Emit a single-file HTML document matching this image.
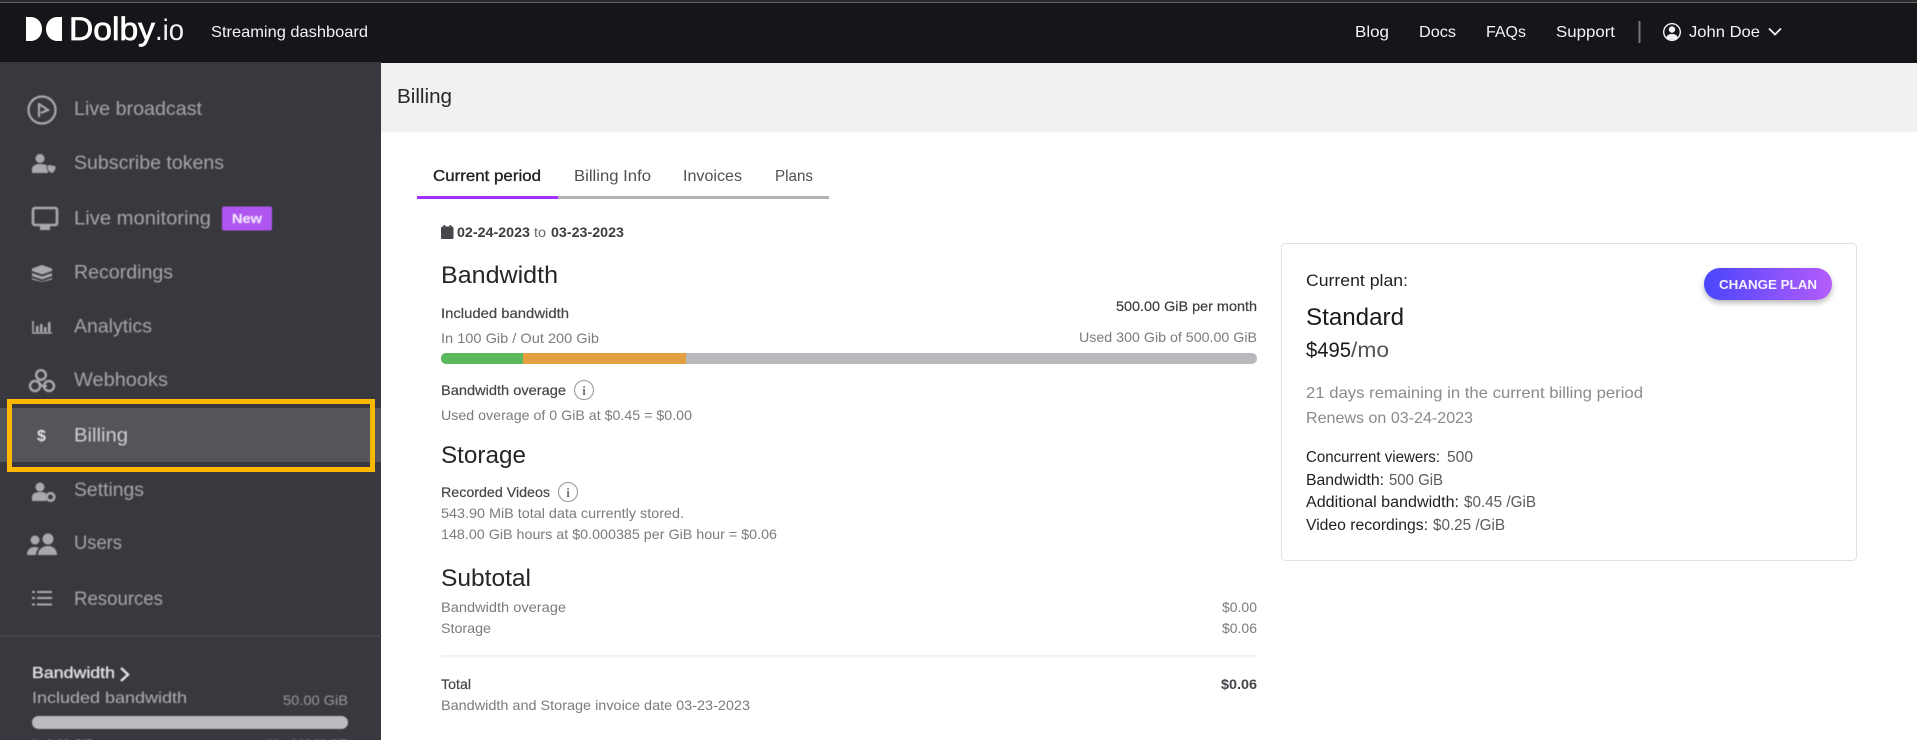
<!DOCTYPE html>
<html lang="en">
<head>
<meta charset="utf-8">
<title>Dolby.io Streaming dashboard - Billing</title>
<style>
html,body{margin:0;padding:0;background:#fff;width:1917px;height:740px;overflow:hidden}
svg{display:block}
text{font-family:"Liberation Sans",sans-serif;white-space:pre}
.nav{font-size:19px;fill:#a5a5a9}
.top{font-size:16px;fill:#f4f4f6}
.t13{font-size:14px;fill:#7b7b80}
.m13{font-size:14px;fill:#45454a;stroke:#45454a;stroke-width:.2px}
.h{font-size:24px;fill:#26262a}
.tab{font-size:16px;fill:#4f4f55}
.card{font-size:15.500px;fill:#1f1f24}
.val{font-size:15.500px;fill:#5b5b60}
.gray{font-size:16px;fill:#8a8a8f}
</style>
</head>
<body>
<svg width="1917" height="740" viewBox="0 0 1917 740" xmlns="http://www.w3.org/2000/svg">
<defs>
<filter id="b" x="-2%" y="-2%" width="104%" height="104%"><feGaussianBlur stdDeviation="0.45"/></filter>
<linearGradient id="g" x1="0" x2="1" y1="0" y2="0"><stop offset="0" stop-color="#4a46fb"/><stop offset="1" stop-color="#b45cfb"/></linearGradient>
<filter id="s" x="-20%" y="-30%" width="140%" height="180%"><feDropShadow dx="0" dy="3" stdDeviation="3" flood-color="#000" flood-opacity=".28"/></filter>
</defs>

<!-- header -->
<rect x="0" y="0" width="1917" height="63" fill="#15151a"/>
<rect x="0" y="0" width="1917" height="2" fill="#2b2b2e"/>
<rect x="0" y="2" width="1917" height="1" fill="#626266"/>
<path d="M26 17h4.500c6.600 0 11.500 5.200 11.500 12s-4.900 12-11.500 12H26z" fill="#fff"/>
<path d="M62 17h-4.500c-6.600 0-11.500 5.200-11.500 12s4.900 12 11.500 12H62z" fill="#fff"/>
<text x="69" y="40" font-size="32" fill="#fff" stroke="#fff" stroke-width=".7" textLength="86" lengthAdjust="spacingAndGlyphs">Dolby</text>
<text x="155" y="40" font-size="30" fill="#f2f2f2" font-weight="400" textLength="29" lengthAdjust="spacingAndGlyphs">.io</text>
<text x="211" y="37" class="top" textLength="157" lengthAdjust="spacingAndGlyphs">Streaming dashboard</text>
<text x="1355" y="37" class="top" textLength="34" lengthAdjust="spacingAndGlyphs">Blog</text>
<text x="1419" y="37" class="top" textLength="37" lengthAdjust="spacingAndGlyphs">Docs</text>
<text x="1486" y="37" class="top" textLength="40" lengthAdjust="spacingAndGlyphs">FAQs</text>
<text x="1556" y="37" class="top" textLength="59" lengthAdjust="spacingAndGlyphs">Support</text>
<rect x="1638.500" y="21" width="2" height="22" fill="#77777b"/>
<circle cx="1672" cy="32" r="8.300" fill="none" stroke="#f4f4f6" stroke-width="1.400"/>
<circle cx="1672" cy="29.500" r="3.200" fill="#f4f4f6"/>
<path d="M1666 38c1-3 3-4 6-4s5 1 6 4c-2 2-10 2-12 0z" fill="#f4f4f6"/>
<text x="1689" y="37" class="top" textLength="71" lengthAdjust="spacingAndGlyphs">John Doe</text>
<path d="M1769 28.500l6 6 6-6" fill="none" stroke="#f4f4f6" stroke-width="1.800"/>

<!-- sidebar -->
<rect x="0" y="62" width="381" height="678" fill="#38383e"/>
<rect x="0" y="408" width="381" height="54" fill="#54555a"/>
<g filter="url(#b)">
<text x="74" y="115" class="nav" textLength="128" lengthAdjust="spacingAndGlyphs">Live broadcast</text>
<text x="74" y="169" class="nav" textLength="150" lengthAdjust="spacingAndGlyphs">Subscribe tokens</text>
<text x="74" y="224.500" class="nav" textLength="137" lengthAdjust="spacingAndGlyphs">Live monitoring</text>
<rect x="222" y="206.500" width="50" height="24" rx="2" fill="#b056f0"/>
<text x="232" y="223" font-size="13" font-weight="700" fill="#f3e4ff" textLength="30" lengthAdjust="spacingAndGlyphs">New</text>
<text x="74" y="278.500" class="nav" textLength="99" lengthAdjust="spacingAndGlyphs">Recordings</text>
<text x="74" y="332.500" class="nav" textLength="78" lengthAdjust="spacingAndGlyphs">Analytics</text>
<text x="74" y="386" class="nav" textLength="94" lengthAdjust="spacingAndGlyphs">Webhooks</text>
<text x="74" y="441.500" class="nav" style="fill:#cfcfd2" textLength="54" lengthAdjust="spacingAndGlyphs">Billing</text>
<text x="74" y="496" class="nav" textLength="70" lengthAdjust="spacingAndGlyphs">Settings</text>
<text x="74" y="549" class="nav" textLength="48" lengthAdjust="spacingAndGlyphs">Users</text>
<text x="74" y="605" class="nav" textLength="89" lengthAdjust="spacingAndGlyphs">Resources</text>

<!-- sidebar icons -->
<circle cx="42" cy="110" r="13.500" fill="none" stroke="#a9a9ad" stroke-width="2.200"/>
<path d="M39 103v14M39 104l9 6-7 3" fill="none" stroke="#a9a9ad" stroke-width="2.200"/>
<circle cx="40" cy="158.500" r="4.500" fill="#a9a9ad"/>
<path d="M32 173v-4c0-3 3-5 8-5 3 0 6 .7 8 2v7z" fill="#a9a9ad"/>
<path d="M49 164.500l7 1.500c0 4-2 6.500-4 7.500-3-1-5-3.500-5-7.500z" fill="#a9a9ad" stroke="#38383e" stroke-width="1"/>
<rect x="33" y="208" width="24" height="17" rx="2" fill="none" stroke="#a9a9ad" stroke-width="2.600"/>
<rect x="40" y="225" width="10" height="5" fill="#a9a9ad"/>
<path d="M42 265l10 3.500v2.500l-10 3.500-10-3.500v-2.500zM32 273l10 3.500 10-3.500v3l-10 3.500-10-3.500zM32 278l10 3.500 10-3.500v1.500l-10 2.500-10-2.500z" fill="#a9a9ad"/>
<path d="M33 321v12h19" fill="none" stroke="#a9a9ad" stroke-width="1.600"/>
<path d="M36 326h2.500v6H36zM40 324h2.500v8H40zM44 327h2.500v5H44zM48 322h2.500v10H48z" fill="#a9a9ad"/>
<circle cx="41" cy="375" r="4.800" fill="none" stroke="#a9a9ad" stroke-width="2.400"/>
<circle cx="35" cy="386" r="5" fill="none" stroke="#a9a9ad" stroke-width="2.400"/>
<circle cx="49" cy="386" r="5" fill="none" stroke="#a9a9ad" stroke-width="2.400"/>
<path d="M38 381l4 5h5" fill="none" stroke="#a9a9ad" stroke-width="2"/>
<text x="37" y="441" font-size="16" font-weight="700" fill="#e4e4e6">$</text>
<circle cx="40" cy="487" r="4.500" fill="#a9a9ad"/>
<path d="M32 501v-4c0-3 3-5 8-5 3 0 5 .5 6 1.500v7.500z" fill="#a9a9ad"/>
<circle cx="50.500" cy="497" r="3.800" fill="none" stroke="#a9a9ad" stroke-width="2.600"/>
<circle cx="48" cy="539" r="5.500" fill="#a9a9ad"/>
<circle cx="35" cy="540" r="4.500" fill="#a9a9ad"/>
<path d="M27 555c0-5 3-8 8-8 2 0 3 .5 4 1-2 2-3 4-3 7zM38 555c0-5 4-9 10-9s9 4 9 9z" fill="#a9a9ad"/>
<path d="M32 591h3v2h-3zM37 591h15v2H37zM32 597h3v2h-3zM37 597h15v2H37zM32 603.500h3v2h-3zM37 603.500h15v2H37z" fill="#a9a9ad"/>

<rect x="0" y="635" width="381" height="1.500" fill="#4b4b51"/>
<text x="32" y="678" font-size="16" fill="#e6e6e8" stroke="#e6e6e8" stroke-width=".3" textLength="83" lengthAdjust="spacingAndGlyphs">Bandwidth</text>
<path d="M121 668l7 6.500-7 6.500" fill="none" stroke="#e3e3e5" stroke-width="2.400"/>
<text x="32" y="703" font-size="16" fill="#b0b0b4" textLength="155" lengthAdjust="spacingAndGlyphs">Included bandwidth</text>
<text x="283" y="705" font-size="14" fill="#97979b" textLength="65" lengthAdjust="spacingAndGlyphs">50.00 GiB</text>
<rect x="32" y="716" width="316" height="13" rx="6.500" fill="#bbbac0"/>
<text x="32" y="749" font-size="14" fill="#97979b" textLength="62" lengthAdjust="spacingAndGlyphs">In 0.00 GiB</text>
<text x="269" y="749" font-size="14" fill="#97979b" textLength="79" lengthAdjust="spacingAndGlyphs">Used 10.00 GiB</text>
</g>
<rect x="9.500" y="401.500" width="363" height="68" fill="none" stroke="#fdb900" stroke-width="5"/>

<!-- content head -->
<rect x="381" y="63" width="1536" height="69" fill="#f1f1f1"/>
<text x="397" y="103" font-size="20" fill="#26262b" textLength="55" lengthAdjust="spacingAndGlyphs">Billing</text>

<!-- tabs -->
<text x="433" y="181" font-size="16" fill="#212126" stroke="#212126" stroke-width=".35" textLength="108" lengthAdjust="spacingAndGlyphs">Current period</text>
<text x="574" y="181" class="tab" textLength="77" lengthAdjust="spacingAndGlyphs">Billing Info</text>
<text x="683" y="181" class="tab" textLength="59" lengthAdjust="spacingAndGlyphs">Invoices</text>
<text x="775" y="181" class="tab" textLength="38" lengthAdjust="spacingAndGlyphs">Plans</text>
<rect x="558" y="196" width="271" height="3" fill="#b3b3b3"/>
<rect x="417" y="196" width="141" height="3" fill="#a22fff"/>

<!-- date -->
<rect x="441" y="228" width="12.500" height="11" rx="1" fill="#47474b"/>
<path d="M441 228.500q0-2 2-2h8.500q2 0 2 2v1h-12.500z" fill="#47474b"/>
<rect x="443.500" y="225" width="1.800" height="3" fill="#47474b"/><rect x="449.500" y="225" width="1.800" height="3" fill="#47474b"/>
<text x="457" y="237" font-size="13.500" font-weight="700" fill="#3c3c42" textLength="73" lengthAdjust="spacingAndGlyphs">02-24-2023</text>
<text x="534" y="237" font-size="13.500" fill="#66666b" textLength="12" lengthAdjust="spacingAndGlyphs">to</text>
<text x="551" y="237" font-size="13.500" font-weight="700" fill="#3c3c42" textLength="73" lengthAdjust="spacingAndGlyphs">03-23-2023</text>

<!-- bandwidth -->
<text x="441" y="283" class="h" textLength="117" lengthAdjust="spacingAndGlyphs">Bandwidth</text>
<text x="441" y="318" class="m13" textLength="128" lengthAdjust="spacingAndGlyphs">Included bandwidth</text>
<text x="1116" y="311" class="m13" style="fill:#3a3a3f" textLength="141" lengthAdjust="spacingAndGlyphs">500.00 GiB per month</text>
<text x="441" y="343" class="t13" textLength="158" lengthAdjust="spacingAndGlyphs">In 100 Gib / Out 200 Gib</text>
<text x="1079" y="342" class="t13" textLength="178" lengthAdjust="spacingAndGlyphs">Used 300 Gib of 500.00 GiB</text>
<rect x="441" y="353" width="816" height="11" rx="5" fill="#b9b8bd"/>
<path d="M523 353h-77a5 5 0 0 0-5 5v1a5 5 0 0 0 5 5h77z" fill="#5cb85c"/>
<rect x="523" y="353" width="163" height="11" fill="#e4a03f"/>
<text x="441" y="395" class="m13" textLength="125" lengthAdjust="spacingAndGlyphs">Bandwidth overage</text>
<circle cx="584" cy="390" r="9.500" fill="none" stroke="#9a9a9e" stroke-width="1.100"/>
<text x="584" y="395" font-size="13" font-weight="700" fill="#77777c" text-anchor="middle" style="font-family:'Liberation Serif',serif">i</text>
<text x="441" y="420" class="t13" textLength="251" lengthAdjust="spacingAndGlyphs">Used overage of 0 GiB at $0.45 = $0.00</text>

<!-- storage -->
<text x="441" y="463" class="h" textLength="85" lengthAdjust="spacingAndGlyphs">Storage</text>
<text x="441" y="497" class="m13" textLength="109" lengthAdjust="spacingAndGlyphs">Recorded Videos</text>
<circle cx="568" cy="492" r="9.500" fill="none" stroke="#9a9a9e" stroke-width="1.100"/>
<text x="568" y="497" font-size="13" font-weight="700" fill="#77777c" text-anchor="middle" style="font-family:'Liberation Serif',serif">i</text>
<text x="441" y="518" class="t13" textLength="243" lengthAdjust="spacingAndGlyphs">543.90 MiB total data currently stored.</text>
<text x="441" y="539" class="t13" textLength="336" lengthAdjust="spacingAndGlyphs">148.00 GiB hours at $0.000385 per GiB hour = $0.06</text>

<!-- subtotal -->
<text x="441" y="586" class="h" textLength="90" lengthAdjust="spacingAndGlyphs">Subtotal</text>
<text x="441" y="612" class="t13" textLength="125" lengthAdjust="spacingAndGlyphs">Bandwidth overage</text>
<text x="441" y="633" class="t13" textLength="50" lengthAdjust="spacingAndGlyphs">Storage</text>
<text x="1222" y="612" class="t13" textLength="35" lengthAdjust="spacingAndGlyphs">$0.00</text>
<text x="1222" y="633" class="t13" textLength="35" lengthAdjust="spacingAndGlyphs">$0.06</text>
<rect x="441" y="655" width="816" height="2.500" fill="#f1f1f1"/>
<text x="441" y="689" class="m13" textLength="30" lengthAdjust="spacingAndGlyphs">Total</text>
<text x="1221" y="689" font-size="14" font-weight="700" fill="#45454a" textLength="36" lengthAdjust="spacingAndGlyphs">$0.06</text>
<text x="441" y="710" class="t13" textLength="309" lengthAdjust="spacingAndGlyphs">Bandwidth and Storage invoice date 03-23-2023</text>

<!-- plan card -->
<rect x="1281.500" y="243.500" width="575" height="317" rx="4" fill="#fff" stroke="#e2e2e2"/>
<text x="1306" y="286" font-size="17" fill="#1f1f24" textLength="102" lengthAdjust="spacingAndGlyphs">Current plan:</text>
<text x="1306" y="325" font-size="24" fill="#1a1a1e" textLength="98" lengthAdjust="spacingAndGlyphs">Standard</text>
<text x="1306" y="357" font-size="21" fill="#1a1a1e" textLength="45" lengthAdjust="spacingAndGlyphs">$495</text>
<text x="1351" y="357" font-size="21" fill="#55555a" textLength="38" lengthAdjust="spacingAndGlyphs">/mo</text>
<text x="1306" y="398" class="gray" textLength="337" lengthAdjust="spacingAndGlyphs">21 days remaining in the current billing period</text>
<text x="1306" y="423" class="gray" textLength="167" lengthAdjust="spacingAndGlyphs">Renews on 03-24-2023</text>
<text x="1306" y="462" class="card" textLength="134" lengthAdjust="spacingAndGlyphs">Concurrent viewers:</text>
<text x="1447" y="462" class="val" textLength="26" lengthAdjust="spacingAndGlyphs">500</text>
<text x="1306" y="485" class="card" textLength="78" lengthAdjust="spacingAndGlyphs">Bandwidth:</text>
<text x="1389" y="485" class="val" textLength="54" lengthAdjust="spacingAndGlyphs">500 GiB</text>
<text x="1306" y="507" class="card" textLength="153" lengthAdjust="spacingAndGlyphs">Additional bandwidth:</text>
<text x="1464" y="507" class="val" textLength="72" lengthAdjust="spacingAndGlyphs">$0.45 /GiB</text>
<text x="1306" y="530" class="card" textLength="122" lengthAdjust="spacingAndGlyphs">Video recordings:</text>
<text x="1433" y="530" class="val" textLength="72" lengthAdjust="spacingAndGlyphs">$0.25 /GiB</text>
<rect x="1704" y="268" width="128" height="32" rx="16" fill="url(#g)" filter="url(#s)"/>
<text x="1719" y="289" font-size="13" font-weight="700" fill="#f4f0ff" textLength="98" lengthAdjust="spacingAndGlyphs">CHANGE PLAN</text>
</svg>
</body>
</html>
